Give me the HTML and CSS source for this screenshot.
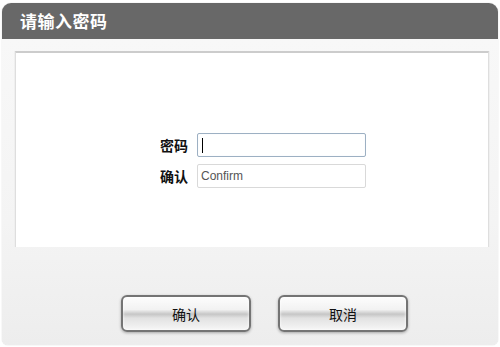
FILE: index.html
```html
<!DOCTYPE html>
<html lang="zh-CN">
<head>
  <meta charset="UTF-8" />
  <title>请输入密码</title>
  <link rel="stylesheet" href="styles.css">
</head>
<body>

<div class="dialog">
  <div class="titlebar">请输入密码</div>

  <div class="content">
    <div class="panel">
      <div class="form">
        <label>密码</label>
        <div class="field active"><span class="caret"></span></div>
        <label>确认</label>
        <div class="field">Confirm</div>
      </div>
    </div>

    <div class="actions">
      <button class="btn">确认</button>
      <button class="btn">取消</button>
    </div>
  </div>
</div>

</body>
</html>
```

FILE: styles.css
```css
body {
  margin: 0;
  background: #fff;
  font-family: 'Noto Sans CJK SC', 'Liberation Sans', sans-serif;
  width: 500px;
  height: 347px;
  overflow: hidden;
}

.dialog {
  margin: 3px 2px 0 2px;
  height: 342px;
  border-radius: 9px 9px 6px 6px;
  overflow: hidden;
  display: flex;
  flex-direction: column;
  box-shadow: 0 0 1px rgba(0,0,0,0.3);
}

.titlebar {
  height: 36px;
  line-height: 36px;
  background: #686868;
  color: #fff;
  font-size: 17px;
  font-weight: bold;
  padding-left: 18px;
  letter-spacing: 0.5px;
}

.content {
  flex: 1;
  background: linear-gradient(#f8f8f8, #f4f4f4 60%, #ededed);
  padding: 12px 9px 0 13px;
}

.panel {
  background: #fff;
  height: 194px;
  border-top: 2px solid #cccccc;
  border-left: 1px solid #dedede;
  border-right: 1px solid #dedede;
  box-shadow: -1px 0 0 #efefef, 1px 0 0 #efefef;
}

.form {
  display: grid;
  grid-template-columns: 30px 169px;
  column-gap: 7px;
  row-gap: 7px;
  align-items: center;
  padding: 80px 0 0 144px;
}

.form label {
  font-size: 14px;
  font-weight: bold;
  color: #111;
  line-height: 24px;
}

.field {
  box-sizing: border-box;
  height: 24px;
  border: 1px solid #d9d9d9;
  border-radius: 2px;
  font-family: 'Liberation Sans', sans-serif;
  font-size: 12px;
  color: #555;
  line-height: 22px;
  padding-left: 3px;
}

.field.active {
  border-color: #9db0c3;
  box-shadow: inset 0 0 1px #dfe8f0;
}

.caret {
  display: inline-block;
  width: 1px;
  height: 15px;
  background: #000;
  vertical-align: middle;
  margin-left: 1px;
}

.actions {
  display: flex;
  gap: 27px;
  padding: 48px 0 0 106px;
}

.btn {
  width: 130px;
  height: 37px;
  border: 2px solid #747474;
  border-radius: 6px;
  background: linear-gradient(#fdfdfd 0%, #f2f2f2 38%, #c6c6c6 52%, #e2e2e2 64%, #f6f6f6 100%);
  box-shadow: 0 1px 3px rgba(0,0,0,0.3), inset 0 0 3px #fff;
  font-family: 'Noto Sans CJK SC', sans-serif;
  font-size: 14px;
  color: #111;
  padding: 0;
  cursor: pointer;
}
```
